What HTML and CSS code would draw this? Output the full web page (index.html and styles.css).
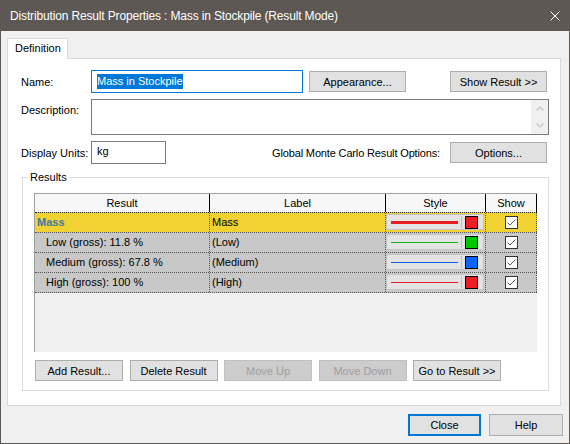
FILE: index.html
```html
<!DOCTYPE html>
<html lang="en">
<head>
<meta charset="utf-8">
<title>Distribution Result Properties</title>
<link rel="stylesheet" href="styles.css">
</head>
<body>
<div class="window">
  <div class="titlebar">
    <span class="title">Distribution Result Properties : Mass in Stockpile (Result Mode)</span>
    <svg class="close-x" width="10" height="10" viewBox="0 0 10 10"><path d="M0.5 0.5 L9.5 9.5 M9.5 0.5 L0.5 9.5" stroke="#fff" stroke-width="1" fill="none"/></svg>
  </div>
  <div class="client">
    <div class="tabs"><div class="tab">Definition</div></div>
    <div class="panel">
      <div class="row row-name">
        <span class="label">Name:</span>
        <div class="field field-name"><span class="sel">Mass in Stockpile</span></div>
        <button class="btn btn-appearance">Appearance...</button>
        <button class="btn btn-right">Show Result &gt;&gt;</button>
      </div>
      <div class="row row-desc">
        <span class="label label-top">Description:</span>
        <div class="field field-desc">
          <div class="vscroll">
            <div class="arrow"><svg width="8" height="5" viewBox="0 0 8 5"><path d="M0.5 4.5 L4 1 L7.5 4.5" stroke="#c4c4c4" stroke-width="1.2" fill="none"/></svg></div>
            <div class="arrow"><svg width="8" height="5" viewBox="0 0 8 5"><path d="M0.5 0.5 L4 4 L7.5 0.5" stroke="#c4c4c4" stroke-width="1.2" fill="none"/></svg></div>
          </div>
        </div>
      </div>
      <div class="row row-units">
        <span class="label">Display Units:</span>
        <div class="field field-units">kg</div>
        <span class="global-label">Global Monte Carlo Result Options:</span>
        <button class="btn btn-options">Options...</button>
      </div>
      <fieldset class="results">
        <legend>Results</legend>
        <div class="grid">
          <div class="grid-row head">
            <div class="cell">Result</div>
            <div class="cell">Label</div>
            <div class="cell">Style</div>
            <div class="cell">Show</div>
          </div>
          <div class="grid-row data selected">
            <div class="cell c-result main">Mass</div>
            <div class="cell c-label">Mass</div>
            <div class="cell c-style">
              <div class="style-box"><span class="line thick red-line"></span><span class="sep"></span><span class="swatch sw-red"></span></div>
            </div>
            <div class="cell c-show"><span class="check"><svg width="11" height="11" viewBox="0 0 11 11"><path d="M1.5 5.5 L4 8 L9.5 2.5" stroke="#555" stroke-width="1" fill="none"/></svg></span></div>
          </div>
          <div class="grid-row data">
            <div class="cell c-result sub">Low (gross): 11.8 %</div>
            <div class="cell c-label">(Low)</div>
            <div class="cell c-style">
              <div class="style-box"><span class="line green-line"></span><span class="sep"></span><span class="swatch sw-green"></span></div>
            </div>
            <div class="cell c-show"><span class="check"><svg width="11" height="11" viewBox="0 0 11 11"><path d="M1.5 5.5 L4 8 L9.5 2.5" stroke="#555" stroke-width="1" fill="none"/></svg></span></div>
          </div>
          <div class="grid-row data">
            <div class="cell c-result sub">Medium (gross): 67.8 %</div>
            <div class="cell c-label">(Medium)</div>
            <div class="cell c-style">
              <div class="style-box"><span class="line blue-line"></span><span class="sep"></span><span class="swatch sw-blue"></span></div>
            </div>
            <div class="cell c-show"><span class="check"><svg width="11" height="11" viewBox="0 0 11 11"><path d="M1.5 5.5 L4 8 L9.5 2.5" stroke="#555" stroke-width="1" fill="none"/></svg></span></div>
          </div>
          <div class="grid-row data last">
            <div class="cell c-result sub">High (gross): 100 %</div>
            <div class="cell c-label">(High)</div>
            <div class="cell c-style">
              <div class="style-box"><span class="line red-line"></span><span class="sep"></span><span class="swatch sw-red"></span></div>
            </div>
            <div class="cell c-show"><span class="check"><svg width="11" height="11" viewBox="0 0 11 11"><path d="M1.5 5.5 L4 8 L9.5 2.5" stroke="#555" stroke-width="1" fill="none"/></svg></span></div>
          </div>
        </div>
        <div class="grid-buttons">
          <button class="btn btn-small">Add Result...</button>
          <button class="btn btn-small">Delete Result</button>
          <button class="btn btn-small" disabled>Move Up</button>
          <button class="btn btn-small" disabled>Move Down</button>
          <button class="btn btn-small">Go to Result &gt;&gt;</button>
        </div>
      </fieldset>
    </div>
    <div class="footer">
      <button class="btn btn-close">Close</button>
      <button class="btn btn-help">Help</button>
    </div>
  </div>
</div>
</body>
</html>
```
FILE: styles.css
```css
* { box-sizing: border-box; }
html, body { margin: 0; padding: 0; }
body {
  font-family: "Liberation Sans", Arial, sans-serif;
  font-size: 11px;
  color: #000;
  background: #f0f0f0;
}
.window {
  width: 570px;
  height: 444px;
  border: 1px solid #5d5853;
  border-top: 0;
  background: #f0f0f0;
  display: flex;
  flex-direction: column;
}
.titlebar {
  height: 31px;
  flex: none;
  background: #5d5853;
  color: #fff;
  display: flex;
  align-items: center;
  padding: 0 9px 0 9px;
  font-size: 12px;
}
.title { flex: 1; letter-spacing: -0.15px; }
.close-x { display: block; }
.client {
  padding: 7px 6px 0 6px;
  display: flex;
  flex-direction: column;
}
.tabs { display: flex; }
.tab {
  width: 61px;
  height: 21px;
  border: 1px solid #d9d9d9;
  border-bottom: 0;
  background: #fff;
  margin-bottom: -1px;
  position: relative;
  z-index: 1;
  padding-left: 7px;
  line-height: 19px;
}
.panel {
  width: 554px;
  height: 348px;
  border: 1px solid #d9d9d9;
  background: #fff;
  padding: 11px 11px 0 13px;
}
.row { display: flex; align-items: center; }
.row-desc { align-items: flex-start; margin-top: 6px; }
.row-units { margin-top: 6px; }
.label { width: 70px; flex: none; }
.label-top { margin-top: 5px; }
.field {
  border: 1px solid #7a7a7a;
  background: #fff;
  height: 23px;
}
.field-name {
  width: 212px;
  border-color: #0078d7;
  padding: 3px 0 0 5px;
}
.sel {
  display: inline-block;
  background: #0078d7;
  color: #fff;
  line-height: 15px;
}
.field-desc {
  width: 458px;
  height: 36px;
  display: flex;
  justify-content: flex-end;
}
.vscroll {
  width: 17px;
  background: #f0f0f0;
  display: flex;
  flex-direction: column;
  justify-content: space-between;
}
.arrow {
  height: 17px;
  display: flex;
  align-items: center;
  justify-content: center;
}
.arrow svg { display: block; }
.field-units {
  width: 75px;
  padding-left: 5px;
  line-height: 19px;
}
.global-label { margin-left: auto; letter-spacing: -0.15px; }
.btn {
  font-family: "Liberation Sans", Arial, sans-serif;
  font-size: 11px;
  color: #000;
  height: 21px;
  width: 97px;
  border: 1px solid #adadad;
  background: #e1e1e1;
  padding: 0;
  margin: 0;
}
.btn:disabled {
  background: #cccccc;
  border-color: #bfbfbf;
  color: #a0a0a0;
}
.btn-appearance { margin-left: 6px; }
.btn-right { margin-left: auto; margin-right: 2px; }
.btn-options { margin-left: 10px; margin-right: 2px; }

.results {
  margin: 7px 0 0 1px;
  padding: 9px 11px 9px 11px;
  border: 1px solid #dcdcdc;
  min-width: 0;
}
.results legend {
  padding: 0 2px;
  margin-left: -6px;
  line-height: 13px;
}
.grid {
  height: 159px;
  border-top: 1px solid #a0a0a0;
  border-left: 1px solid #a0a0a0;
  background: #f0f0f0;
}
.grid-row {
  display: grid;
  grid-template-columns: 174px 176px 100px 52px;
}
.head { height: 18px; background: #f7f7f7; }
.head .cell { text-align: center; line-height: 18px; }
.head .cell + .cell { border-left: 1px solid #000; }
.head .cell:last-child { border-right: 1px solid #000; }
.data {
  height: 20px;
  border-top: 1px dotted #555;
  background: #c8c8c8;
}
.data.last { height: 21px; border-bottom: 1px dotted #555; }
.data.selected { background: #f0d232; border-top-color: #222; }
.data .cell { line-height: 19px; white-space: nowrap; overflow: hidden; }
.data .cell + .cell { border-left: 1px dotted #555; }
.data .cell:last-child { border-right: 1px dotted #555; }
.c-result.main { padding-left: 2px; font-weight: bold; color: #3f79a3; }
.c-result.sub { padding-left: 11px; }
.c-label { padding-left: 2px; }
.style-box {
  margin: 1px 1px 0 0;
  height: 16px;
  border: 1px solid #c4c4c4;
  background: #e3e3e3;
  display: flex;
  align-items: center;
  padding-left: 4px;
}
.line { width: 67px; height: 1px; }
.line.thick { height: 3px; }
.red-line { background: #e81c24; }
.green-line { background: #14b414; }
.blue-line { background: #1060e8; }
.sep {
  width: 1px;
  height: 12px;
  margin-left: 3px;
  background: #c0c0c0;
}
.swatch {
  width: 13px;
  height: 13px;
  margin-left: 3px;
  border: 1px solid #000;
}
.sw-red { background: #ee1c24; }
.sw-green { background: #00c800; }
.sw-blue { background: #0a64ff; }
.c-show {
  display: flex;
  align-items: center;
  justify-content: center;
}
.check {
  width: 13px;
  height: 13px;
  border: 1px solid #333;
  background: #fff;
  display: flex;
}
.check svg { display: block; }
.grid-buttons {
  display: flex;
  gap: 6.5px;
  margin-top: 8px;
  padding-left: 1px;
}
.btn-small { width: 88px; }
.footer {
  display: flex;
  justify-content: flex-end;
  gap: 8px;
  margin-top: 8px;
}
.btn-close {
  width: 73px;
  height: 22px;
  border: 2px solid #0078d7;
}
.btn-help { width: 74px; height: 22px; }
```
